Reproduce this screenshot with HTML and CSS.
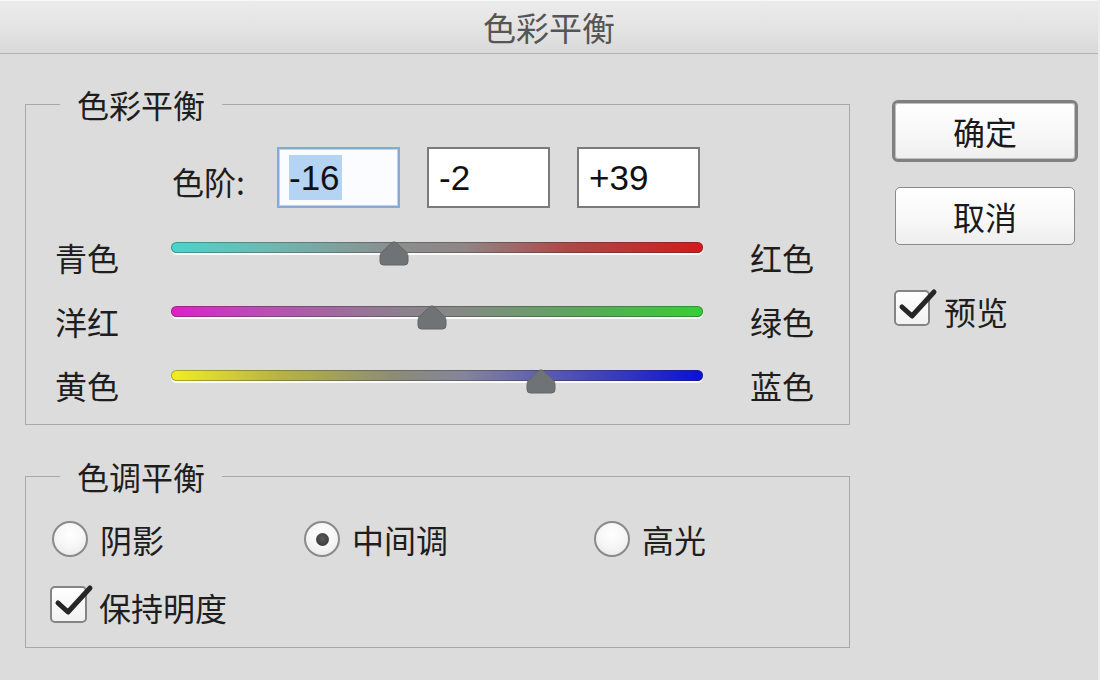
FILE: index.html
```html
<!DOCTYPE html>
<html lang="zh-CN">
<head>
<meta charset="utf-8">
<title>色彩平衡</title>
<link rel="stylesheet" href="styles.css">
</head>
<body>
<div class="window">
  <div class="titlebar">色彩平衡</div>
  <div class="content">
    <div class="main">
      <fieldset class="group group-balance">
        <legend>色彩平衡</legend>
        <div class="levels">
          <span class="levels-label">色阶:</span>
          <div class="field field-focus"><span class="sel">-16</span></div>
          <div class="field">-2</div>
          <div class="field">+39</div>
        </div>
        <div class="sliders">
          <div class="slider-row">
            <span class="lbl-left">青色</span>
            <div class="track track-cr">
              <svg class="thumb" style="left:calc(42% - 15px)" width="30" height="25" viewBox="0 0 30 25"><path d="M15 1 C16.5 1 17.5 1.8 18.5 2.8 L27 11 C28.5 12.5 29 14 29 16 V20.5 Q29 24 25.5 24 H4.5 Q1 24 1 20.5 V16 C1 14 1.5 12.5 3 11 L11.5 2.8 C12.5 1.8 13.5 1 15 1 Z"/></svg>
            </div>
            <span class="lbl-right">红色</span>
          </div>
          <div class="slider-row">
            <span class="lbl-left">洋红</span>
            <div class="track track-mg">
              <svg class="thumb" style="left:calc(49% - 15px)" width="30" height="25" viewBox="0 0 30 25"><path d="M15 1 C16.5 1 17.5 1.8 18.5 2.8 L27 11 C28.5 12.5 29 14 29 16 V20.5 Q29 24 25.5 24 H4.5 Q1 24 1 20.5 V16 C1 14 1.5 12.5 3 11 L11.5 2.8 C12.5 1.8 13.5 1 15 1 Z"/></svg>
            </div>
            <span class="lbl-right">绿色</span>
          </div>
          <div class="slider-row">
            <span class="lbl-left">黄色</span>
            <div class="track track-yb">
              <svg class="thumb" style="left:calc(69.5% - 15px)" width="30" height="25" viewBox="0 0 30 25"><path d="M15 1 C16.5 1 17.5 1.8 18.5 2.8 L27 11 C28.5 12.5 29 14 29 16 V20.5 Q29 24 25.5 24 H4.5 Q1 24 1 20.5 V16 C1 14 1.5 12.5 3 11 L11.5 2.8 C12.5 1.8 13.5 1 15 1 Z"/></svg>
            </div>
            <span class="lbl-right">蓝色</span>
          </div>
        </div>
      </fieldset>

      <fieldset class="group group-tone">
        <legend>色调平衡</legend>
        <div class="radio-row">
          <span class="radio-item item-1"><span class="radio"></span><span class="opt-label">阴影</span></span>
          <span class="radio-item item-2"><span class="radio radio-on"></span><span class="opt-label">中间调</span></span>
          <span class="radio-item item-3"><span class="radio"></span><span class="opt-label">高光</span></span>
        </div>
        <div class="check-row">
          <span class="check">
            <span class="box"></span>
            <svg class="tick" width="46" height="46" viewBox="0 0 46 46"><path d="M8 25 L18 34 L40 10"/></svg>
          </span>
          <span class="opt-label">保持明度</span>
        </div>
      </fieldset>
    </div>

    <div class="side">
      <div class="btn btn-default">确定</div>
      <div class="btn btn-cancel">取消</div>
      <div class="preview">
        <span class="check">
          <span class="box"></span>
          <svg class="tick" width="46" height="46" viewBox="0 0 46 46"><path d="M8 25 L18 34 L40 10"/></svg>
        </span>
        <span class="opt-label">预览</span>
      </div>
    </div>
  </div>
</div>
</body>
</html>
```

FILE: styles.css
```css
* { box-sizing: border-box; }

html, body {
  margin: 0;
  padding: 0;
  background: #dddcdc;
}

body {
  width: 1100px;
  height: 680px;
  overflow: hidden;
  font-family: "Noto Sans CJK SC", "Noto Sans", sans-serif;
  color: #1e1e1e;
}

.window {
  width: 1100px;
  height: 680px;
  background: #dddcdc;
  border-right: 2px solid #ececec;
}

.titlebar {
  height: 54px;
  border-top: 1px solid #f6f6f6;
  border-bottom: 1px solid #b4b4b4;
  background: linear-gradient(to bottom, #ececec 0%, #e2e2e2 60%, #d9d9d9 100%);
  color: #555;
  font-size: 33px;
  line-height: 52px;
  text-align: center;
}

.content {
  display: flex;
  align-items: flex-start;
}

.main {
  width: 850px;
  padding-left: 25px;
  display: flex;
  flex-direction: column;
}

.group {
  margin: 0;
  padding: 0;
  min-width: 0;
  width: 825px;
  border: 1px solid #a9a9a9;
  border-radius: 0;
}

.group legend {
  margin-left: 34px;
  padding: 0 17px;
  font-size: 32px;
  line-height: 36px;
  color: #1e1e1e;
}

.group-balance {
  margin-top: 32px;
  padding-bottom: 7px;
}

.levels {
  display: flex;
  align-items: center;
  height: 61px;
  margin-top: 25px;
  margin-left: 146px;
}

.levels-label {
  width: 105px;
  font-size: 32px;
  line-height: 40px;
  padding-top: 6px;
}

.field {
  width: 123px;
  height: 61px;
  margin-right: 27px;
  background: #fff;
  border: 2px solid #7b7b7b;
  font-family: "Liberation Sans", Arial, sans-serif;
  font-size: 35px;
  line-height: 57px;
  padding-left: 10px;
  color: #111;
}

.field-focus {
  border: 2px solid #86a9d6;
  box-shadow: inset 0 0 0 1px #bcd3ee;
  background: #fbfcff;
}

.sel {
  display: inline-block;
  background: #b5d3f3;
  line-height: 45px;
  padding-right: 2px;
}

.sliders {
  margin-top: 17px;
}

.slider-row {
  display: flex;
  align-items: flex-start;
  height: 64px;
}

.lbl-left,
.lbl-right {
  width: 68px;
  font-size: 32px;
  line-height: 64px;
  white-space: nowrap;
}

.lbl-left { margin-left: 29px; }
.lbl-right { margin-left: 47px; }

.track {
  position: relative;
  width: 532px;
  height: 11px;
  margin-top: 17px;
  margin-left: 48px;
  border-radius: 6px;
  box-shadow: inset 0 0 0 1px rgba(40, 40, 40, 0.35), 0 2px 0 rgba(255, 255, 255, 0.85);
}

.track-cr {
  background: linear-gradient(to right, #46d6cb 0%, #6fb8b2 18%, #8a8e8e 42%, #8f8686 55%, #b04646 75%, #d41a1c 100%);
}

.track-mg {
  background: linear-gradient(to right, #e21ec8 0%, #b850b2 18%, #8e7e90 42%, #848a84 55%, #5aa85a 78%, #34d034 100%);
}

.track-yb {
  background: linear-gradient(to right, #f2ee22 0%, #b8b440 20%, #8c8c78 42%, #84849a 55%, #5050b8 75%, #0a10d6 100%);
}

.thumb {
  position: absolute;
  top: -1px;
}

.thumb path {
  fill: #6f7375;
  stroke: #62666a;
  stroke-width: 1;
}

.group-tone {
  margin-top: 33px;
  padding-bottom: 17px;
}

.radio-row {
  display: flex;
  align-items: center;
  height: 46px;
  margin-top: 22px;
  margin-left: 26px;
}

.radio-item {
  display: flex;
  align-items: center;
}

.item-1 { width: 252px; }
.item-2 { width: 290px; }

.radio {
  position: relative;
  width: 36px;
  height: 36px;
  border-radius: 50%;
  border: 2px solid #8a8a8a;
  background: radial-gradient(circle at 50% 35%, #ffffff 0%, #f6f6f6 50%, #e4e4e4 100%);
  margin-right: 12px;
  flex: none;
}

.radio-on::after {
  content: "";
  position: absolute;
  left: 10px;
  top: 10px;
  width: 13px;
  height: 13px;
  border-radius: 50%;
  background: radial-gradient(circle at 50% 40%, #5a5a5a 0%, #333 100%);
}

.opt-label {
  font-size: 32px;
  line-height: 46px;
  white-space: nowrap;
}

.check-row {
  display: flex;
  align-items: center;
  height: 46px;
  margin-top: 22px;
  margin-left: 24px;
}

.check {
  position: relative;
  width: 37px;
  height: 37px;
  margin-right: 12px;
  flex: none;
}

.check-row .check {
  margin-bottom: 6px;
}

.box {
  display: block;
  width: 37px;
  height: 37px;
  border: 2px solid #858585;
  border-radius: 5px;
  background: linear-gradient(to bottom, #ffffff 0%, #f2f2f2 100%);
}

.tick {
  position: absolute;
  left: 0;
  top: -8px;
}

.tick path {
  fill: none;
  stroke: #262626;
  stroke-width: 5;
  stroke-linecap: round;
  stroke-linejoin: round;
}

.side {
  width: 186px;
  margin-left: 42px;
  margin-top: 46px;
  display: flex;
  flex-direction: column;
  align-items: center;
}

.btn {
  display: flex;
  align-items: center;
  justify-content: center;
  font-size: 32px;
  color: #1a1a1a;
  background: linear-gradient(to bottom, #ffffff 0%, #f7f7f7 60%, #eeeeee 100%);
}

.btn-default {
  width: 186px;
  height: 62px;
  border: 3px solid #808080;
  border-radius: 6px;
  box-shadow: inset 0 0 0 1px #c0c0c0;
}

.btn-cancel {
  width: 180px;
  height: 58px;
  margin-top: 25px;
  border: 1.5px solid #8a8a8a;
  border-radius: 5px;
}

.preview {
  align-self: flex-start;
  display: flex;
  align-items: center;
  margin-top: 43px;
  margin-left: 2px;
}

.preview .check {
  width: 36px;
  height: 36px;
  margin-right: 14px;
  margin-bottom: 6px;
}

.preview .box {
  width: 36px;
  height: 36px;
}
```
